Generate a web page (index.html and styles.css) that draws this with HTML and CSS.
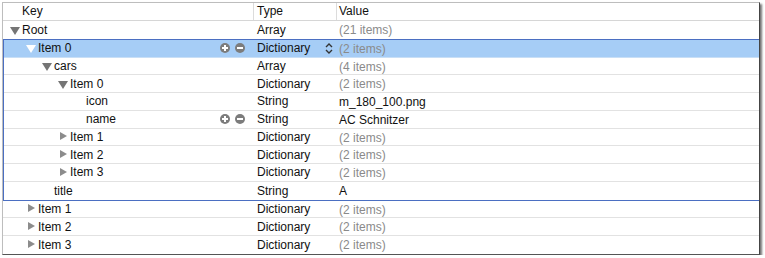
FILE: index.html
```html
<!DOCTYPE html>
<html lang="en">
<head>
  <meta charset="UTF-8" />
  <title>Property List</title>
  <link rel="stylesheet" href="styles.css">
</head>
<body>

  <!-- Plist editor outline -->
  <div class="outline">
    <div class="row head">
      <div class="c-key">Key</div>
      <div class="c-type">Type</div>
      <div class="c-val">Value</div>
    </div>

    <div class="row l0 before-group">
      <div class="c-key"><span class="tri open"></span>Root</div>
      <div class="c-type">Array</div>
      <div class="c-val dim">(21 items)</div>
    </div>

    <!-- selected group -->
    <div class="group">
      <div class="row l1 sel">
        <div class="c-key"><span class="tri open"></span>Item 0
          <span class="btns"><i class="pm plus"></i><i class="pm minus"></i></span>
        </div>
        <div class="c-type">Dictionary
          <span class="stepper">
            <svg width="8" height="13" viewBox="0 0 8 13"><path d="M1 5 L4 2 L7 5 M1 8 L4 11 L7 8" fill="none" stroke="#333" stroke-width="1.4"/></svg>
          </span>
        </div>
        <div class="c-val dim">(2 items)</div>
      </div>

      <div class="row l2">
        <div class="c-key"><span class="tri open"></span>cars</div>
        <div class="c-type">Array</div>
        <div class="c-val dim">(4 items)</div>
      </div>

      <div class="row l3">
        <div class="c-key"><span class="tri open"></span>Item 0</div>
        <div class="c-type">Dictionary</div>
        <div class="c-val dim">(2 items)</div>
      </div>

      <div class="row l4">
        <div class="c-key"><span class="tri none"></span>icon</div>
        <div class="c-type">String</div>
        <div class="c-val">m_180_100.png</div>
      </div>

      <div class="row l4">
        <div class="c-key"><span class="tri none"></span>name
          <span class="btns"><i class="pm plus"></i><i class="pm minus"></i></span>
        </div>
        <div class="c-type">String</div>
        <div class="c-val">AC Schnitzer</div>
      </div>

      <div class="row l3">
        <div class="c-key"><span class="tri closed"></span>Item 1</div>
        <div class="c-type">Dictionary</div>
        <div class="c-val dim">(2 items)</div>
      </div>

      <div class="row l3">
        <div class="c-key"><span class="tri closed"></span>Item 2</div>
        <div class="c-type">Dictionary</div>
        <div class="c-val dim">(2 items)</div>
      </div>

      <div class="row l3">
        <div class="c-key"><span class="tri closed"></span>Item 3</div>
        <div class="c-type">Dictionary</div>
        <div class="c-val dim">(2 items)</div>
      </div>

      <div class="row l2 last">
        <div class="c-key"><span class="tri none"></span>title</div>
        <div class="c-type">String</div>
        <div class="c-val">A</div>
      </div>
    </div>

    <div class="row l1">
      <div class="c-key"><span class="tri closed"></span>Item 1</div>
      <div class="c-type">Dictionary</div>
      <div class="c-val dim">(2 items)</div>
    </div>

    <div class="row l1">
      <div class="c-key"><span class="tri closed"></span>Item 2</div>
      <div class="c-type">Dictionary</div>
      <div class="c-val dim">(2 items)</div>
    </div>

    <div class="row l1 last">
      <div class="c-key"><span class="tri closed"></span>Item 3</div>
      <div class="c-type">Dictionary</div>
      <div class="c-val dim">(2 items)</div>
    </div>
  </div>

</body>
</html>
```

FILE: styles.css
```css
:root {
  --line: #e2e2e2;
  --sel: #a6cdf6;
  --focus: #4b6fc2;
  --tri: #757575;
}

* {
  margin: 0;
  padding: 0;
  box-sizing: border-box;
}

html, body {
  background: #fff;
  font-family: 'Liberation Sans', Arial, sans-serif;
  font-size: 12px;
  color: #111;
}

.outline {
  margin: 2px 0 0 2px;
  width: 758px;
  border: 1px solid #bdbdbd;
  border-right-color: #444;
  border-bottom-color: #555;
  box-shadow: 2px 2px 2px rgba(0, 0, 0, 0.55);
  background: #fff;
}

/* === ROWS === */
.row {
  display: flex;
  height: 17.75px;
  line-height: 18px;
  border-bottom: 1px solid var(--line);
}

.row.last,
.row.before-group {
  border-bottom: none;
}

.c-key {
  width: 250px;
  display: flex;
  align-items: center;
  padding-left: 8px;
  white-space: nowrap;
}

.c-type {
  width: 83px;
  display: flex;
  align-items: center;
  justify-content: space-between;
  padding-left: 4px;
}

.c-val {
  flex: 1;
  padding-left: 3px;
}

.dim {
  color: #8a8a8a;
}

/* header */
.row.head {
  height: 18px;
  line-height: 17px;
  border-bottom: 1px solid #d6d6d6;
}

.head .c-key {
  padding-left: 19px;
}

.head .c-type,
.head .c-val {
  border-left: 1px solid #dcdcdc;
  padding-left: 3px;
}

.head .c-val {
  padding-left: 2px;
}

/* indent levels */
.l1 .c-key { padding-left: 24px; }
.l2 .c-key { padding-left: 40px; }
.l3 .c-key { padding-left: 56px; }
.l4 .c-key { padding-left: 72px; }

.group .c-key {
  width: 249px;
}

.group .l1 .c-key { padding-left: 23px; }
.group .l2 .c-key { padding-left: 39px; }
.group .l3 .c-key { padding-left: 55px; }
.group .l4 .c-key { padding-left: 71px; }

/* selected group */
.group {
  border: 1px solid var(--focus);
  border-right: none;
}

.row.sel {
  background: var(--sel);
  border-bottom-color: #c9dff6;
}

/* disclosure triangles */
.tri {
  display: inline-block;
  width: 9px;
  height: 8px;
  margin-right: 2px;
  position: relative;
  flex-shrink: 0;
}

.tri.open::before {
  content: '';
  position: absolute;
  left: -1px;
  top: 1px;
  border-left: 5px solid transparent;
  border-right: 5px solid transparent;
  border-top: 8px solid var(--tri);
}

.tri.closed::before {
  content: '';
  position: absolute;
  left: 1px;
  top: -0.5px;
  border-top: 4.5px solid transparent;
  border-bottom: 4.5px solid transparent;
  border-left: 7px solid #8c8c8c;
}

.sel .tri.open::before {
  border-top-color: #fff;
}

/* +/- buttons */
.btns {
  margin-left: auto;
  margin-right: 8px;
  display: flex;
  gap: 5px;
}

.pm {
  width: 10px;
  height: 10px;
  border-radius: 50%;
  background: #7c7c7c;
  position: relative;
}

.pm::before,
.pm.plus::after {
  content: '';
  position: absolute;
  left: 2px;
  top: 4px;
  width: 6px;
  height: 2px;
  background: #fff;
}

.pm.plus::after {
  left: 4px;
  top: 2px;
  width: 2px;
  height: 6px;
}

.stepper {
  display: flex;
  margin-right: 3px;
}
```
